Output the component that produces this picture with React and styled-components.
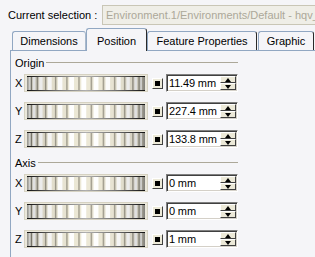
import styled, { createGlobalStyle } from "styled-components";
import { useId } from "react";

const GlobalStyle = createGlobalStyle`
  html, body { margin: 0; padding: 0; }
  body {
    background: #f5f5f8;
    font-family: "Liberation Sans", Arial, sans-serif;
    font-size: 11px;
    color: #000;
  }
`;

const Window = styled.div`
  width: 315px;
  height: 257px;
  overflow: hidden;
  background: #f5f5f8;
`;

const SelectionBar = styled.div`
  display: flex;
  align-items: center;
  height: 20px;
  padding: 5px 0 0 8px;
`;

const SelectionLabel = styled.span`
  flex: none;
  width: 94px;
  white-space: nowrap;
`;

const SelectionField = styled.div`
  flex: none;
  width: 240px;
  height: 20px;
  box-sizing: border-box;
  border: 1px solid #c9c6b6;
  background: #efeee7;
  color: #aca899;
  padding-left: 3px;
  line-height: 18px;
  white-space: nowrap;
  overflow: hidden;
`;

const TabStrip = styled.div`
  display: flex;
  align-items: flex-end;
  height: 22px;
  margin-top: 3px;
  padding-left: 12px;
  position: relative;
  z-index: 1;
`;

const Tab = styled.div`
  flex: none;
  box-sizing: border-box;
  width: ${(p) => p.$w}px;
  height: ${(p) => (p.$active ? 23 : 19)}px;
  margin-bottom: ${(p) => (p.$active ? -1 : 0)}px;
  margin-right: ${(p) => p.$gap || 0}px;
  padding-top: ${(p) => (p.$active ? 6 : 3)}px;
  line-height: 13px;
  text-align: center;
  white-space: nowrap;
  background: #f5f5f8;
  border-top: 1px solid #91a7c2;
  border-left: 1px solid #91a7c2;
  border-right: 1px solid ${(p) => (p.$shadow ? "#2a2a2a" : "#a9b9cc")};
  border-radius: 3px 3px 0 0;
`;

const Panel = styled.div`
  margin-left: 10px;
  height: 206px;
  border-top: 1px solid #91a7c2;
  border-left: 1px solid #91a7c2;
  padding: 5px 0 0 4px;
`;

const GroupHeader = styled.div`
  display: flex;
  align-items: center;
  width: 223px;
  height: 13px;
  margin-top: ${(p) => p.$top || 0}px;
`;

const GroupLine = styled.div`
  flex: 1;
  height: 1px;
  margin-left: 2px;
  background: #aca899;
`;

const Row = styled.div`
  display: flex;
  align-items: center;
  height: 18px;
  margin-top: ${(p) => p.$top}px;
`;

const AxisLabel = styled.span`
  flex: none;
  width: 9px;
`;

const WheelSvg = styled.svg`
  flex: none;
  display: block;
  margin-right: 4px;
`;

const SnapButton = styled.div`
  flex: none;
  box-sizing: border-box;
  width: 11px;
  height: 11px;
  margin-right: 3px;
  display: flex;
  align-items: center;
  justify-content: center;
  background: #ece9d8;
  border-top: 1px solid #fff;
  border-left: 1px solid #fff;
  border-right: 1px solid #404040;
  border-bottom: 1px solid #404040;

  &::after {
    content: "";
    width: 5px;
    height: 5px;
    background: #000;
  }
`;

const ValueBox = styled.div`
  flex: none;
  box-sizing: border-box;
  display: flex;
  width: 72px;
  height: 18px;
  background: #fff;
  border-top: 1px solid #808080;
  border-left: 1px solid #808080;
  border-right: 1px solid #fff;
  border-bottom: 1px solid #fff;
  box-shadow: inset 1px 1px 0 #404040, inset -1px -1px 0 #d4d0c8;
  padding: 1px 1px 1px 1px;
`;

const ValueText = styled.span`
  flex: 1;
  padding-left: 1px;
  line-height: 15px;
  white-space: nowrap;
  letter-spacing: -0.15px;
`;

const Spinner = styled.div`
  flex: none;
  width: 16px;
  display: flex;
  flex-direction: column;
`;

const SpinButton = styled.div`
  flex: 1;
  box-sizing: border-box;
  display: flex;
  align-items: center;
  justify-content: center;
  background: #ece9d8;
  border-top: 1px solid #fff;
  border-left: 1px solid #fff;
  border-right: 1px solid #404040;
  border-bottom: 1px solid #404040;

  &::after {
    content: "";
    width: 0;
    height: 0;
    border-left: 3.5px solid transparent;
    border-right: 3.5px solid transparent;
    ${(p) =>
      p.$down
        ? "border-top: 4px solid #000;"
        : "border-bottom: 4px solid #000;"}
  }
`;

const mix = (a, b, t) => {
  const pa = a.match(/\w\w/g).map((h) => parseInt(h, 16));
  const pb = b.match(/\w\w/g).map((h) => parseInt(h, 16));
  return (
    "rgb(" +
    pa.map((v, i) => Math.round(v + (pb[i] - v) * t)).join(",") +
    ")"
  );
};

// thumbwheel: ridges spaced like a cylinder seen from the side
function Thumbwheel() {
  const id = useId().replace(/:/g, "");
  const x0 = 3;
  const x1 = 121;
  const n = 15;
  const cx = (x0 + x1) / 2;
  const r = (x1 - x0) / 2;
  const pos = [];
  for (let k = 0; k <= n; k++) {
    pos.push(cx + r * Math.sin(-Math.PI / 2 + (Math.PI * k) / n));
  }
  const bands = [];
  for (let k = 0; k < n; k++) {
    const a = pos[k];
    const b = pos[k + 1];
    const mid = -Math.PI / 2 + (Math.PI * (k + 0.5)) / n;
    const light = Math.pow(Math.cos(mid), 0.35);
    const w = b - a;
    const line = Math.min(1.6, w * 0.3);
    bands.push(
      <g key={k}>
        <rect x={a} y={3} width={w} height={13} fill={mix("505050", "ece8d6", light)} />
        <rect x={a + w * 0.12} y={3} width={w * 0.4} height={13} fill={mix("707070", "ffffff", light)} />
        <rect x={b - line} y={3} width={line} height={13} fill={mix("1a1a1a", "a6a293", light)} />
      </g>
    );
  }
  return (
    <WheelSvg width="124" height="18" viewBox="0 0 124 18">
      <defs>
        <linearGradient id={id} x1="0" x2="1" y1="0" y2="0">
          <stop offset="0" stopColor="#111" />
          <stop offset="0.25" stopColor="#707070" />
          <stop offset="0.5" stopColor="#b0b0b0" />
          <stop offset="0.75" stopColor="#707070" />
          <stop offset="1" stopColor="#111" />
        </linearGradient>
      </defs>
      <rect x="0" y="0" width="124" height="18" fill="#ebe8db" />
      <rect x="0.5" y="0.5" width="123" height="17" fill="none" stroke="#d6d2c2" />
      <rect x="3" y="3" width="118" height="13" fill="#8a8a8a" />
      {bands}
      <rect x="3" y="2" width="118" height="1" fill={`url(#${id})`} />
      <rect x="3" y="16" width="118" height="1" fill={`url(#${id})`} />
    </WheelSvg>
  );
}

function CoordRow({ axis, value, top }) {
  return (
    <Row $top={top}>
      <AxisLabel>{axis}</AxisLabel>
      <Thumbwheel />
      <SnapButton />
      <ValueBox>
        <ValueText>{value}</ValueText>
        <Spinner>
          <SpinButton />
          <SpinButton $down />
        </Spinner>
      </ValueBox>
    </Row>
  );
}

const origin = [
  ["X", "11.49 mm"],
  ["Y", "227.4 mm"],
  ["Z", "133.8 mm"],
];

const axis = [
  ["X", "0 mm"],
  ["Y", "0 mm"],
  ["Z", "1 mm"],
];

export default function App() {
  return (
    <Window>
      <GlobalStyle />
      <SelectionBar>
        <SelectionLabel>Current selection :</SelectionLabel>
        <SelectionField>Environment.1/Environments/Default - hqv_</SelectionField>
      </SelectionBar>
      <TabStrip>
        <Tab $w={74}>Dimensions</Tab>
        <Tab $w={61} $active $shadow>Position</Tab>
        <Tab $w={110} $shadow $gap={1}>Feature Properties</Tab>
        <Tab $w={56} $shadow>Graphic</Tab>
      </TabStrip>
      <Panel>
        <GroupHeader>
          Origin
          <GroupLine />
        </GroupHeader>
        {origin.map(([a, v], i) => (
          <CoordRow key={a} axis={a} value={v} top={i === 0 ? 5 : 10} />
        ))}
        <GroupHeader $top={8}>
          Axis
          <GroupLine />
        </GroupHeader>
        {axis.map(([a, v], i) => (
          <CoordRow key={a} axis={a} value={v} top={i === 0 ? 5 : 10} />
        ))}
      </Panel>
    </Window>
  );
}
